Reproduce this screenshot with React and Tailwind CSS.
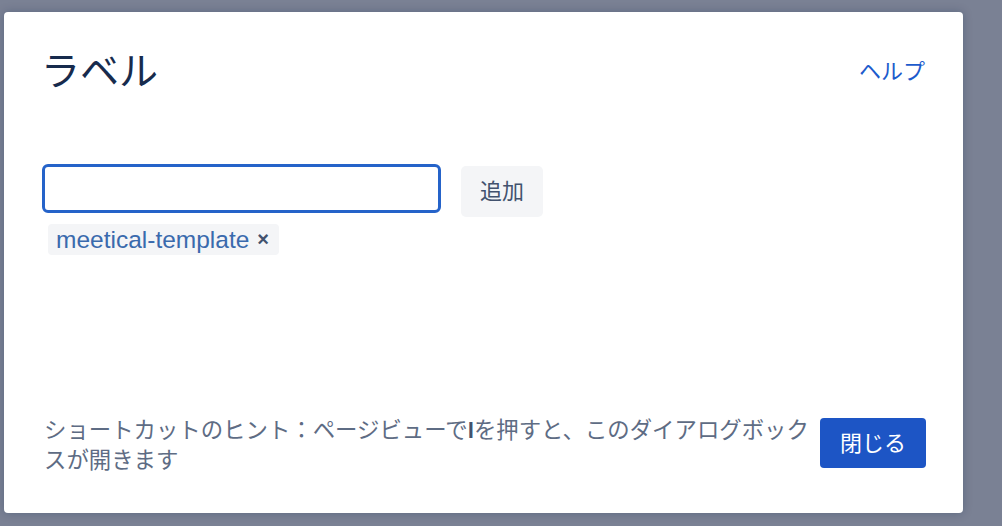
import { useState } from "react";

const font = "font-['Liberation_Sans','Noto_Sans_CJK_JP',sans-serif]";

const LabelDialog = () => {
  const [labels, setLabels] = useState(["meetical-template"]);
  const [value, setValue] = useState("");

  const addLabel = () => {
    if (!value.trim()) return;
    setLabels([...labels, value.trim()]);
    setValue("");
  };

  return (
    <div className={`w-[1002px] h-[526px] bg-[#7a8194] pl-[4px] pt-[12px] ${font}`}>
      <div className="w-[959px] h-[501px] bg-white rounded-[4px] shadow-[0_0_10px_rgba(9,30,66,0.25)] flex flex-col px-[40px] pt-[40px] pb-[37px]">
        {/* Header */}
        <div className="flex items-center justify-between">
          <h2 className="ml-[-3px] text-[39px] leading-[39px] text-[#172b4d]">ラベル</h2>
          <a href="#" className="text-[22px] leading-[30px] text-[#1c5bcc] mr-[-2px]">ヘルプ</a>
        </div>

        {/* Label input */}
        <div className="mt-[73px] flex items-start gap-[20px]">
          <input
            value={value}
            onChange={(e) => setValue(e.target.value)}
            className="ml-[-2px] w-[399px] h-[49px] border-[3px] border-[#2563c9] rounded-[6px] px-[10px] text-[22px] outline-none"
          />
          <button
            onClick={addLabel}
            className="mt-[2px] w-[82px] h-[51px] bg-[#f4f5f7] rounded-[5px] text-[22px] text-[#42526e]"
          >
            追加
          </button>
        </div>
        <div className="mt-[7px] ml-[4px] flex gap-[6px]">
          {labels.map((l) => (
            <span key={l} className="h-[31px] flex items-center gap-[8px] bg-[#f4f5f7] rounded-[4px] pl-[8px] pr-[10px] text-[24.5px] leading-[31px] text-[#3a6aad]">
              {l}
              <span className="text-[20px] font-bold text-[#42526e]">×</span>
            </span>
          ))}
        </div>

        {/* Footer */}
        <div className="mt-auto flex items-start justify-between">
          <p className="shrink-0 text-[22.4px] leading-[30px] text-[#5e6c84] w-[775px]">
            ショートカットのヒント：ページビューで<b className="text-[#42526e]">l</b>を押すと、このダイアログボックスが開きます
          </p>
          <button className="shrink-0 mt-[2px] w-[106px] h-[50px] bg-[#1d55c5] rounded-[4px] text-[22px] text-white mr-[-3px]">
            閉じる
          </button>
        </div>
      </div>
    </div>
  );
};

export default function App() {
  return <LabelDialog />;
}
